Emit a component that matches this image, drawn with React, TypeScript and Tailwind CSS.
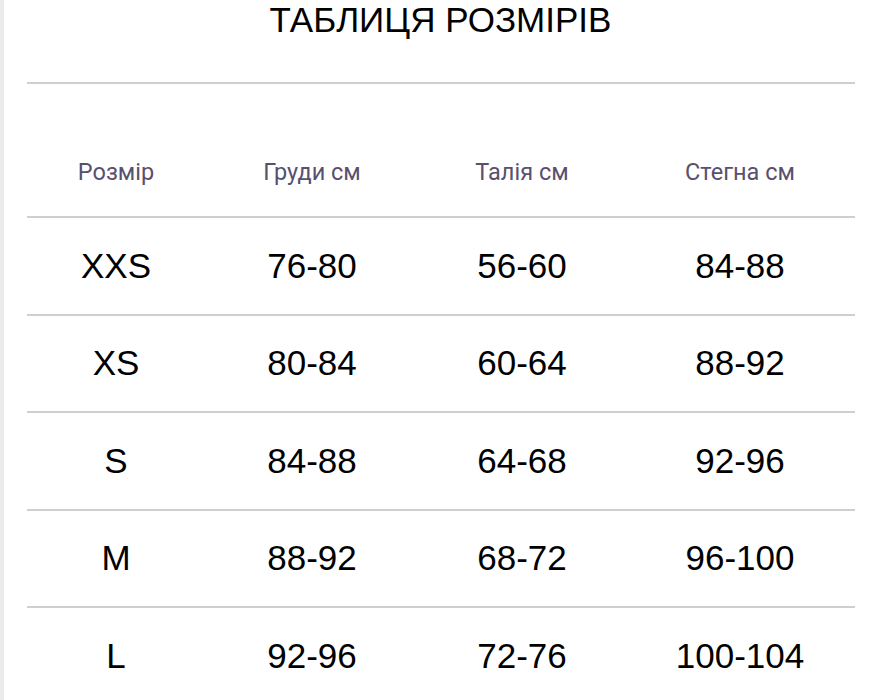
const rows = [
  ['XXS', '76-80', '56-60', '84-88'],
  ['XS', '80-84', '60-64', '88-92'],
  ['S', '84-88', '64-68', '92-96'],
  ['M', '88-92', '68-72', '96-100'],
  ['L', '92-96', '72-76', '100-104'],
];

const headers = ['Розмір', 'Груди см', 'Талія см', 'Стегна см'];

const cols = 'grid grid-cols-[178px_214px_206px_230px]';

export default function App() {
  return (
    <div className="flex h-[700px] w-[877px] overflow-hidden bg-white">
      <div className="w-[4px] shrink-0 bg-[#ebebeb]" />
      <div className="flex-1">
        <h1 className="h-[40px] text-center text-[35px] leading-[40px] text-black font-['Liberation_Sans',Arial,sans-serif]">
          ТАБЛИЦЯ РОЗМІРІВ
        </h1>
        <div className="mt-[42px] pl-[23px] pr-[22px]">
          <div className={`${cols} h-[134px] items-end border-t-2 border-[#cfcfcf] pb-[32px]`}>
            {headers.map((h) => (
              <div
                key={h}
                className="text-center text-[23.5px] leading-[24px] text-[#594f6e] font-['Roboto',sans-serif]"
              >
                {h}
              </div>
            ))}
          </div>
          {rows.map((r) => (
            <div
              key={r[0]}
              className={`${cols} h-[97.5px] items-center border-t-2 border-[#cfcfcf]`}
            >
              {r.map((c, i) => (
                <div
                  key={i}
                  className="text-center text-[35px] leading-[40px] text-black font-['Liberation_Sans',Arial,sans-serif]"
                >
                  {c}
                </div>
              ))}
            </div>
          ))}
        </div>
      </div>
    </div>
  );
}
